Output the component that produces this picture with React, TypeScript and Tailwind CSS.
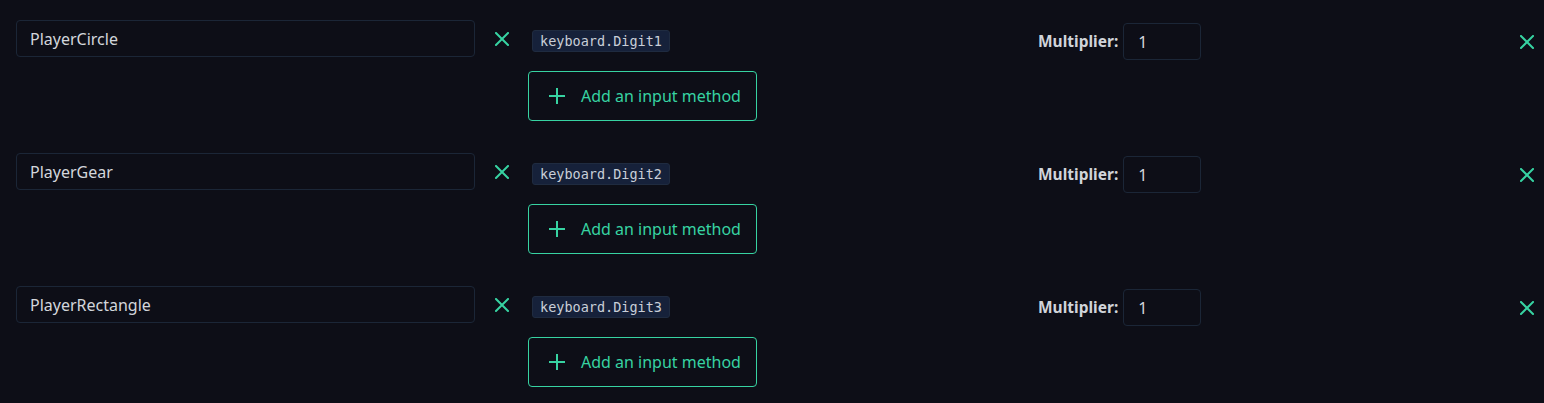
const ACCENT = "text-[#37d3a2]";

type Action = { name: string; key: string; multiplier: string };

const actions: Action[] = [
  { name: "PlayerCircle", key: "keyboard.Digit1", multiplier: "1" },
  { name: "PlayerGear", key: "keyboard.Digit2", multiplier: "1" },
  { name: "PlayerRectangle", key: "keyboard.Digit3", multiplier: "1" },
];

function CloseIcon() {
  return (
    <svg width="14" height="14" viewBox="0 0 14 14" fill="none" className={ACCENT}>
      <path d="M1 1L13 13M13 1L1 13" stroke="currentColor" strokeWidth="2" strokeLinecap="square" />
    </svg>
  );
}

function PlusIcon() {
  return (
    <svg width="16" height="16" viewBox="0 0 16 16" fill="none">
      <path d="M8 0V16M0 8H16" stroke="currentColor" strokeWidth="2" />
    </svg>
  );
}

function ActionRow({ action }: { action: Action }) {
  return (
    <div className="flex items-start">
      <input
        readOnly
        value={action.name}
        className="h-[37px] w-[459px] rounded-[4px] border border-[#1b2637] bg-transparent px-[13px] text-[16px] text-[#d3d6dc] outline-none"
      />
      <button className="flex h-[37px] w-[53px] items-center justify-center">
        <CloseIcon />
      </button>

      <div className="flex w-[510px] flex-col items-start pt-[10px]">
        <code className="ml-1 rounded-[3px] border border-[#1f2b40] bg-[#16213a] px-[7px] py-[1px] font-['DejaVu_Sans_Mono',monospace] text-[13.5px] leading-[18px] text-[#c9cfd8]">
          {action.key}
        </code>
        <button
          className={`mt-[19px] flex h-[50px] w-[229px] items-center gap-4 rounded-[4px] border border-[#37d3a2] pl-[20px] text-[16px] ${ACCENT}`}
        >
          <PlusIcon />
          <span>Add an input method</span>
        </button>
      </div>

      <div className="mt-[3px] flex flex-1 items-center">
        <span className="mr-[5px] text-[15.5px] font-bold text-[#d0d4da]">Multiplier:</span>
        <input
          readOnly
          value={action.multiplier}
          className="h-[37px] w-[78px] rounded-[4px] border border-[#1b2637] bg-transparent px-[14px] text-[16px] text-[#d3d6dc] outline-none"
        />
        <div className="flex-1" />
        <button className="flex h-[37px] w-[34px] items-center justify-center">
          <CloseIcon />
        </button>
      </div>
    </div>
  );
}

export default function App() {
  return (
    <main className="flex min-h-[403px] w-full flex-col gap-[32px] bg-[#0d0e17] pl-4 pt-5 font-['Noto_Sans',sans-serif]">
      {actions.map((action) => (
        <ActionRow key={action.name} action={action} />
      ))}
    </main>
  );
}
